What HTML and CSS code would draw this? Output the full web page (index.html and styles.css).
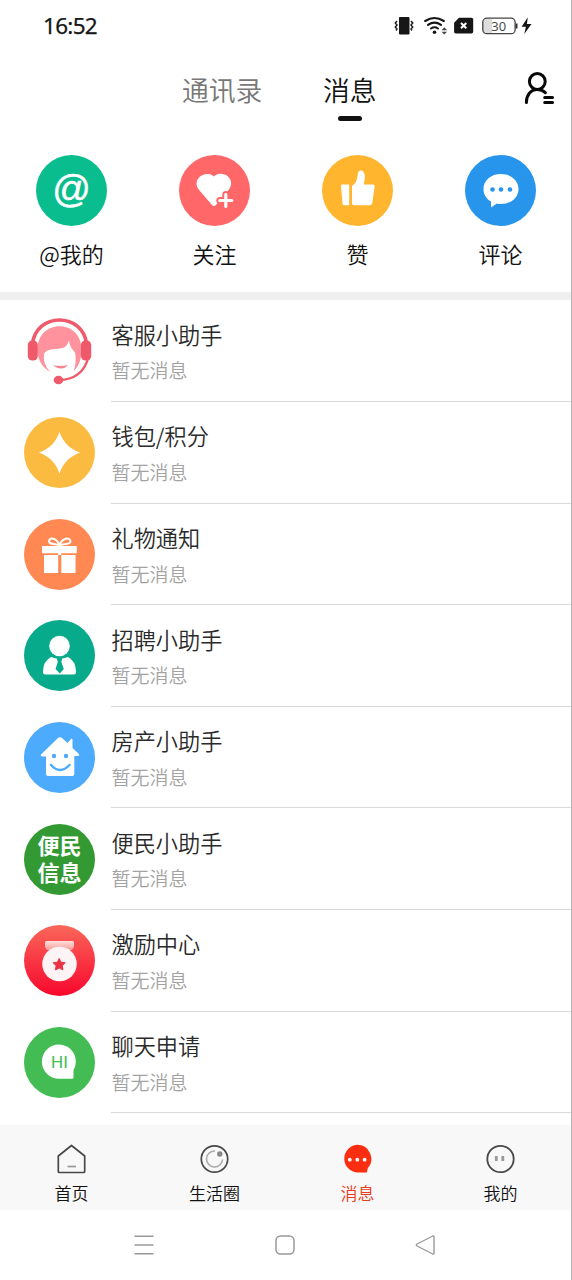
FILE: index.html
```
<!DOCTYPE html>
<html lang="zh-CN">
<head>
<meta charset="utf-8">
<title>消息</title>
<link rel="stylesheet" href="styles.css">
</head>
<body>
<div class="screen">
  <div class="status">
    <span class="clock">16:52</span>
    <svg class="status-icons" width="140" height="22" viewBox="394 14.500 140 22">
      <rect x="399" y="16.500" width="10.500" height="17.500" rx="1" fill="#161616"/>
      <g fill="none" stroke="#222" stroke-width="1.500"><path d="M397 20.500l-1.700 2 1.700 2-1.700 2 1.700 2-1 1.500M411 20.500l1.700 2-1.700 2 1.700 2-1.700 2 1 1.500"/></g>
      <g fill="none" stroke="#161616" stroke-width="2.100" stroke-linecap="round"><path d="M425.200 20.500q9.300-6 18.600 0M428 24.400q6.500-4.500 13 0M431 28q3.500-2.400 7 0"/></g>
      <circle cx="434.500" cy="31.800" r="1.800" fill="#161616"/>
      <path d="M441.500 29.800l2.800-3 2.800 3zM441.500 31.200h5.600l-2.800 2.900z" fill="#444"/>
      <path d="M459 17.300h12.500q1.700 0 1.700 1.700v12.200q0 1.700-1.700 1.700h-15.700q-1.700 0-1.700-1.700v-9z" fill="#161616"/>
      <path d="M461 22.500l5.300 5.300m0-5.300l-5.300 5.300" stroke="#fff" stroke-width="2"/>
      <path d="M486 18h6v15h-6q-3-1-3-4v-7q0-3 3-4z" fill="#ddd"/>
      <rect x="482.800" y="17.700" width="32.300" height="15.500" rx="4" fill="none" stroke="#444" stroke-width="1.300"/>
      <path d="M516.500 23v5" stroke="#333" stroke-width="2"/>
      <text class="charge" x="498.700" y="30" text-anchor="middle">30</text>
      <path d="M527.800 16.800l-6.200 9.400h4.300l-1.600 7.400 7.200-10h-4.600z" fill="#161616"/>
    </svg>
  </div>

  <div class="header">
    <div class="tab">通讯录</div>
    <div class="tab tab-on">消息</div>
    <svg class="contact" width="32" height="36" viewBox="523 71 32 36" fill="none" stroke="#080808" stroke-width="3" stroke-linecap="round">
      <circle cx="537.300" cy="81.500" r="7.900"/>
      <path d="M526.400 102.500c0-7.500 4.200-13 11-13 3.300 0 6 1.200 8 3.200"/>
      <path d="M544.700 97.500h7.800M544.700 102.500h7.800"/>
    </svg>
  </div>

  <div class="quick">
    <div class="quick-item">
      <svg class="disc" viewBox="0 0 71 71"><circle cx="35.500" cy="35.500" r="35.500" fill="#0abd8f"/><text class="at" x="35.500" y="47" text-anchor="middle">@</text></svg>
      <span>@我的</span>
    </div>
    <div class="quick-item">
      <svg class="disc" viewBox="0 0 71 71"><circle cx="35.500" cy="35.500" r="35.500" fill="#ff6769"/><path d="M35 21.500c3-3.700 10.500-3.500 14 0 4.300 4.300 4 9.500.5 13.500L37 50q-2 2-4 0L20.500 35.500c-3.800-4.200-4-9.700 0-13.500 4-3.800 11.300-4 14.500-.5z" fill="#fff"/><path d="M46.800 39.500v12M40.800 45.500h12" stroke="#ff6769" stroke-width="7" stroke-linecap="round"/><path d="M46.800 39.500v12M40.800 45.500h12" stroke="#fff" stroke-width="3.200" stroke-linecap="round"/></svg>
      <span>关注</span>
    </div>
    <div class="quick-item">
      <svg class="disc" viewBox="0 0 71 71"><circle cx="35.500" cy="35.500" r="35.500" fill="#ffb52e"/><path d="M19.500 29.500h7.700v20.800h-5q-1.500 0-1.700-1.500L19 31q0-1.500.5-1.500zM30 31q5-3.500 5.500-10c0-4 2-6 4-5.500 4 1 4 7.500 2.200 14H51q2 0 1.700 2l-2.500 16.800q-.4 2-2.400 2H32q-2 0-2-2z" fill="#fff"/></svg>
      <span>赞</span>
    </div>
    <div class="quick-item">
      <svg class="disc" viewBox="0 0 71 71"><circle cx="35.500" cy="35.500" r="35.500" fill="#2895ed"/><path d="M36 19c10 0 17.500 6.300 17.500 15S46 49 36 49q-2.200 0-4.200-.5L26 52.500V46.500c-4.700-2.700-7.500-7-7.500-12.500C18.500 25.300 26 19 36 19z" fill="#fff"/><g fill="#2895ed"><circle cx="27.500" cy="34.500" r="2.300"/><circle cx="36" cy="34.500" r="2.300"/><circle cx="45" cy="34.500" r="2.300"/></g></svg>
      <span>评论</span>
    </div>
  </div>

  <div class="list">
    <div class="row">
      <svg class="disc" viewBox="0 -2.500 71 71">
        <path d="M13.500 31C13.500 17 23 7.800 35.500 7.800S57.500 17 57.500 31c0 9-2 16-8 22 2-5 2.800-13 1.500-19-3-3-5.500-7-6-12-3 9-8 7.500-14 8.500-6 .6-10 2-11 5-.6 6 .5 12 6.500 18C17.500 49 13.500 40 13.500 31z" fill="#ff929d"/>
        <path d="M8.500 25C10.500 10 22 1.500 35.500 1.500S60.500 10 62.500 25" fill="none" stroke="#f0596a" stroke-width="3.600"/>
        <rect x="3.800" y="22" width="10" height="20" rx="4.500" fill="#f0596a"/><rect x="57" y="22" width="10.200" height="20" rx="4.500" fill="#f0596a"/>
        <path d="M64 40Q58 61 35 61.500" fill="none" stroke="#f0596a" stroke-width="2.400"/><ellipse cx="34.500" cy="61.500" rx="4.800" ry="4.300" fill="#f0596a"/><path d="M29 46.500q7.500 2 15 0-6.500 7-15 0z" fill="#f8828d"/>
      </svg>
      <div class="info"><div class="name">客服小助手</div><div class="note">暂无消息</div></div>
    </div>
    <div class="row">
      <svg class="disc" viewBox="0 0 71 71"><circle cx="35.500" cy="35.500" r="35.500" fill="#fbbb40"/><path d="M35.500 15C39 25 45 31.500 56 35.500 45 40 39 46 35.500 56.500 32 46 26 40 15 35.500 26 31.500 32 25 35.500 15z" fill="#fff"/></svg>
      <div class="info"><div class="name">钱包/积分</div><div class="note">暂无消息</div></div>
    </div>
    <div class="row">
      <svg class="disc" viewBox="0 0 71 71"><circle cx="35.500" cy="35.500" r="35.500" fill="#ff8853"/><path d="M18 27h34.800v7.300H37.300V36H51.500v18H37.300V36h-3.100v18H20V36h14.200v-1.700H18z" fill="#fff"/><path d="M35.500 26.500C31 24 25.500 26 25 22.500c0-5 8-3.500 10.500 4 2.500-7.500 10.500-9 11-4 0 3.500-6 1.500-11 4z" fill="none" stroke="#fff" stroke-width="2"/></svg>
      <div class="info"><div class="name">礼物通知</div><div class="note">暂无消息</div></div>
    </div>
    <div class="row">
      <svg class="disc" viewBox="0 0 71 71"><circle cx="35.500" cy="35.500" r="35.500" fill="#08aa8c"/><circle cx="35.500" cy="26" r="10.300" fill="#fff"/><path d="M27 37q8.500 3 17 0 8 4 8 15 0 2.500-2.500 2.500h-28q-2.500 0-2.500-2.500 0-11 8-15z" fill="#fff"/><path d="M32.500 37.500h6l-1.200 4.500 2.500 7-4 4.500-4.300-4.500 2.300-7z" fill="#08aa8c"/></svg>
      <div class="info"><div class="name">招聘小助手</div><div class="note">暂无消息</div></div>
    </div>
    <div class="row">
      <svg class="disc" viewBox="0 0 71 71"><circle cx="35.500" cy="35.500" r="35.500" fill="#4dabfd"/><path d="M34 16q2-1.500 4 0l5.500 5 3.500-4q1.500-1 1.500 1v8l6 5.500q2 2.500-1 2.500H50.300v18q0 2-2 2H24q-2 0-2-2V34.500h-3.500q-3-.5-1-2.500z" fill="#fff"/><g fill="#4dabfd"><circle cx="30" cy="34" r="2.200"/><circle cx="42" cy="34" r="2.200"/></g><path d="M27 43q9 10 18.500 0" fill="none" stroke="#4dabfd" stroke-width="2.500" stroke-linecap="round"/></svg>
      <div class="info"><div class="name">房产小助手</div><div class="note">暂无消息</div></div>
    </div>
    <div class="row">
      <div class="disc public"><div>便民</div><div>信息</div></div>
      <div class="info"><div class="name">便民小助手</div><div class="note">暂无消息</div></div>
    </div>
    <div class="row">
      <svg class="disc" viewBox="0 0 71 71"><defs><linearGradient id="red" x2="0" y2="1"><stop offset="0" stop-color="#fa675a"/><stop offset="1" stop-color="#f7072d"/></linearGradient><linearGradient id="ribbon" x2="0" y2="1"><stop offset="0" stop-color="#ffe1dd"/><stop offset="1" stop-color="#fa9a94"/></linearGradient></defs><circle cx="35.500" cy="35.500" r="35.500" fill="url(#red)"/><path d="M22.500 16H49q1 0 1 2v4l-2 3H23l-2-3v-4q0-2 1.500-2z" fill="url(#ribbon)"/><circle cx="35.500" cy="39" r="17.300" fill="#fff4f5"/><path d="M35.200 33.500l1.900 3.700 4.100.6-2.900 3 .6 4.100-3.700-1.900-3.700 1.900.6-4.100-2.900-3 4.100-.6z" fill="#ea3446" stroke="#ea3446" stroke-linejoin="round"/></svg>
      <div class="info"><div class="name">激励中心</div><div class="note">暂无消息</div></div>
    </div>
    <div class="row">
      <svg class="disc" viewBox="0 0 71 71"><circle cx="35.500" cy="35.500" r="35.500" fill="#43bc54"/><path d="M35 17.500A17 17 0 0 1 49.500 43v7.500q0 1.300-1.300 1.300H35a17.100 17.100 0 0 1 0-34.300z" fill="#fff"/><text class="hi" x="35.500" y="40.800" text-anchor="middle">HI</text></svg>
      <div class="info"><div class="name">聊天申请</div><div class="note">暂无消息</div></div>
    </div>
  </div>

  <div class="tabbar">
    <div class="item">
      <svg class="glyph" viewBox="0.500 0 30 30" fill="none" stroke="#484848" stroke-width="1.700" stroke-linejoin="round"><path d="M15 1.500L28.200 12v15.500q0 1-1 1H2.800q-1 0-1-1V12z"/><path d="M11 22.500h8.500" stroke="#999"/></svg>
      <span>首页</span>
    </div>
    <div class="item">
      <svg class="glyph" viewBox="0.500 0 30 30" fill="none" stroke="#484848" stroke-width="1.700"><circle cx="15" cy="15" r="13.200"/><path d="M15.500 7a8 8 0 1 0 7.500 8.500" stroke="#aaa" stroke-width="1.500"/><circle cx="20.300" cy="10" r="2.700" fill="#888" stroke="none"/></svg>
      <span>生活圈</span>
    </div>
    <div class="item on">
      <svg class="glyph" viewBox="0.500 0 30 30"><path d="M14.500 .8A14 14 0 0 1 25.300 24l-1 4.500h-9.800A13.900 13.900 0 0 1 14.500 .8z" fill="#fc2e12"/><g fill="#fff"><circle cx="7.300" cy="15.700" r="1.900"/><circle cx="14.800" cy="15.700" r="1.900"/><circle cx="22.100" cy="15.700" r="1.900"/></g></svg>
      <span>消息</span>
    </div>
    <div class="item">
      <svg class="glyph" viewBox="0.500 0 30 30"><circle cx="15" cy="15" r="13.200" fill="none" stroke="#484848" stroke-width="1.800"/><path d="M10.800 12v5M17.300 12v5" stroke="#999" stroke-width="2.800"/></svg>
      <span>我的</span>
    </div>
  </div>

  <div class="system">
    <svg width="22" height="22" viewBox="0 0 22 22" stroke="#999" stroke-width="1.500"><path d="M1.500 2.200h19M1.500 11h19M1.500 19.800h19"/></svg>
    <svg width="22" height="22" viewBox="0 0 22 22" fill="none" stroke="#999" stroke-width="1.500"><rect x="2" y="2" width="18" height="18" rx="4.500"/></svg>
    <svg width="22" height="22" viewBox="0 0 22 22" fill="none" stroke="#999" stroke-width="1.400" stroke-linejoin="round"><path d="M2 10L17.800 2q1.200-.5 1.200 1v16q0 1.500-1.200 1L2 12q-1.300-1 0-2z"/></svg>
  </div>
</div>
</body>
</html>
```
FILE: styles.css
```
* { box-sizing: border-box; }
body {
  margin: 0;
  background: #fff;
  font-family: "Noto Sans CJK SC", sans-serif;
  font-weight: 350;
}
svg { display: block; flex: none; }
.screen {
  width: 572px;
  height: 1280px;
  overflow: hidden;
  display: flex;
  flex-direction: column;
  border-right: 1px solid #b4b4b4;
}
.status {
  height: 52px;
  display: flex;
  justify-content: space-between;
  align-items: center;
  padding: 0 37px 0 43px;
}
.clock {
  font: 400 22.5px/30px "Noto Sans", sans-serif;
  letter-spacing: -0.7px;
  color: #161616;
  -webkit-text-stroke: 0.25px #161616;
}
.charge { font: 13px "Open Sans", sans-serif; fill: #444; }
.header {
  height: 89px;
  display: flex;
  align-items: flex-start;
  padding: 18px 16px 0 182px;
}
.tab {
  font-size: 26.8px;
  line-height: 40px;
  color: #777;
  margin-right: 60.5px;
}
.tab-on { color: #111; margin-right: 0; }
.tab-on::after {
  content: "";
  display: block;
  width: 24px;
  height: 5px;
  margin: 6px auto 0;
  border-radius: 3px;
  background: #111;
}
.contact { margin: 1px 0 0 auto; }
.quick {
  height: 159px;
  padding-top: 14px;
  display: grid;
  grid-template-columns: repeat(4, 143px);
  border-bottom: 8px solid #f0f0f0;
}
.quick-item {
  display: flex;
  flex-direction: column;
  align-items: center;
  gap: 11px;
  font-size: 22px;
  line-height: 32px;
  color: #111;
}
.disc { width: 71px; height: 71px; flex: none; }
.at {
  font: 38px "Liberation Sans", sans-serif;
  fill: #fff;
  stroke: #fff;
  stroke-width: 0.5px;
}
.hi { font: 17px Roboto, sans-serif; fill: #43bc54; }
.list { height: 825px; padding-top: 0.4px; }
.row {
  height: 101.6px;
  display: flex;
  align-items: center;
  gap: 16px;
  padding-left: 24px;
}
.info {
  flex: 1;
  height: 100%;
  padding: 17.5px 0 0 0.5px;
  border-bottom: 1px solid #dadada;
}
.name { font-size: 22.2px; line-height: 32px; color: #2a2a2a; }
.note { font-size: 19px; line-height: 28px; margin-top: 6.5px; color: #a3a3a3; }
.public {
  border-radius: 50%;
  background: #339a33;
  color: #fff;
  font-size: 22px;
  line-height: 27px;
  font-weight: 700;
  text-align: center;
  padding-top: 7.5px;
}
.tabbar {
  height: 85px;
  padding-top: 19px;
  background: #f8f8f8;
  display: grid;
  grid-template-columns: repeat(4, 143px);
}
.item {
  display: flex;
  flex-direction: column;
  align-items: center;
  gap: 6px;
  font-size: 17px;
  line-height: 26px;
  color: #111;
}
.item.on { color: #e83c20; }
.glyph { width: 30px; height: 30px; }
.system {
  height: 70px;
  display: flex;
  align-items: center;
  justify-content: space-between;
  padding: 0 134px 0 133px;
}
```
